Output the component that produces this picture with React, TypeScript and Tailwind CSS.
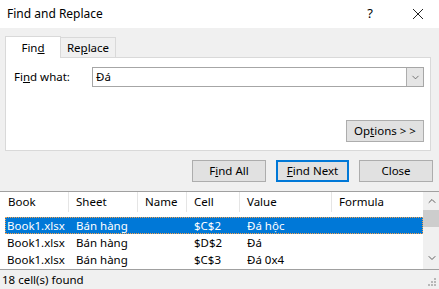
import { ChevronDown, ChevronUp } from "lucide-react";

const cols = [
  { name: "Book", w: "w-[64px]" },
  { name: "Sheet", w: "w-[69px]" },
  { name: "Name", w: "w-[49px]" },
  { name: "Cell", w: "w-[53px]" },
  { name: "Value", w: "w-[92px]" },
  { name: "Formula", w: "w-[90px]" },
];

const rows = [
  ["Book1.xlsx", "Bán hàng", "", "$C$2", "Đá hộc", ""],
  ["Book1.xlsx", "Bán hàng", "", "$D$2", "Đá", ""],
  ["Book1.xlsx", "Bán hàng", "", "$C$3", "Đá 0x4", ""],
];

function Btn({ children, focused, className }: { children: React.ReactNode; focused?: boolean; className?: string }) {
  return (
    <button
      className={`h-[22px] bg-[#e1e1e1] text-[11.5px] text-black flex items-center justify-center ${
        focused ? "border-2 border-[#0078d7]" : "border border-[#adadad]"
      } ${className ?? ""}`}
    >
      {children}
    </button>
  );
}

export default function App() {
  return (
    <div
      className="w-[439px] h-[289px] bg-[#f0f0f0] flex flex-col text-[11.5px] text-black overflow-hidden"
      style={{ fontFamily: '"Noto Sans", "Open Sans", sans-serif' }}
    >
      {/* Title bar */}
      <div className="h-[28px] bg-white flex items-center shrink-0">
        <span className="pl-[7px] text-[12px] flex-1">Find and Replace</span>
        <span className="w-[12px] text-center text-[13px] mr-[36px]">?</span>
        <svg width="12" height="12" viewBox="0 0 12 12" className="mr-[15px]">
          <path d="M1 1L11 11M11 1L1 11" stroke="#222" strokeWidth="1" />
        </svg>
      </div>

      {/* Tabs + panel */}
      <div className="px-[5px] pt-[7px] pr-[8px]">
        <div className="flex items-end h-[22px]">
          <div className="relative z-10 h-[22px] w-[56px] bg-white border border-b-0 border-[#d9d9d9] flex items-center justify-center -mb-px">
            Fin<u>d</u>
          </div>
          <div className="h-[20px] w-[55px] border border-l-0 border-b-0 border-[#d9d9d9] flex items-center justify-center pt-[1px]">
            Re<u>p</u>lace
          </div>
        </div>
        <div className="h-[94px] bg-white border border-[#d9d9d9] flex flex-col pl-[8px] pr-[6px]">
          <div className="flex items-center mt-[9px] h-[20px]">
            <span className="w-[78px]">
              Fi<u>n</u>d what:
            </span>
            <div className="flex-1 h-[20px] border border-[#a6a6a6] flex items-center">
              <span className="pl-[3px] flex-1">Đá</span>
              <div className="w-[17px] h-[18px] bg-[#e5e5e5] border-l border-[#adadad] flex items-center justify-center">
                <ChevronDown className="w-[11px] h-[11px] text-[#444]" strokeWidth={1.5} />
              </div>
            </div>
          </div>
          <div className="flex justify-end mt-[33px]">
            <Btn className="w-[78px]">
              Op<u>t</u>ions &gt; &gt;
            </Btn>
          </div>
        </div>
      </div>

      {/* Buttons */}
      <div className="flex justify-end gap-[10px] pr-[6px] mt-[9px]">
        <Btn className="w-[74px]">
          F<u>i</u>nd All
        </Btn>
        <Btn focused className="w-[73px]">
          <u>F</u>ind Next
        </Btn>
        <Btn className="w-[74px]">Close</Btn>
      </div>

      {/* Results list */}
      <div className="mt-[9px] border-y border-[#a0a0a0] h-[79px] bg-white flex shrink-0">
        <div className="flex-1 pl-[5px]">
          <div className="flex h-[25px]">
            {cols.map((c, i) => (
              <div
                key={c.name}
                className={`${c.w} ${i === cols.length - 1 ? "" : "border-r border-[#e5e5e5]"} h-[20px] pl-[3px] flex items-center ${
                  i === 0 ? "" : "pl-[7px]"
                }`}
              >
                {c.name}
              </div>
            ))}
          </div>
          {rows.map((r, ri) => (
            <div
              key={ri}
              className={`flex h-[17px] ${
                ri === 0 ? "bg-[#0078d7] text-white border border-dotted border-[#f5a04a]" : "border border-transparent"
              }`}
            >
              {r.map((v, i) => (
                <div key={i} className={`${cols[i].w} flex items-center ${i === 0 ? "pl-[1px]" : "pl-[7px]"} ${i === 0 ? "-mr-px" : ""}`}>
                  {v}
                </div>
              ))}
            </div>
          ))}
        </div>
        <div className="w-[17px] bg-[#f0f0f0] flex flex-col items-center">
          <ChevronUp className="w-[12px] h-[12px] mt-[3px] text-[#606060]" strokeWidth={2} />
          <div className="w-[17px] h-[17px] bg-[#cdcdcd] mt-[3px]" />
          <div className="flex-1" />
          <ChevronDown className="w-[12px] h-[12px] mb-[5px] text-[#606060]" strokeWidth={2} />
        </div>
      </div>

      {/* Status bar */}
      <div className="flex-1 flex items-center relative">
        <span className="pl-[2px]">18 cell(s) found</span>
        <svg width="9" height="9" viewBox="0 0 9 9" className="absolute right-[2px] bottom-[2px]">
          {[
            [6, 0],
            [3, 3],
            [6, 3],
            [0, 6],
            [3, 6],
            [6, 6],
          ].map(([x, y], i) => (
            <rect key={i} x={x} y={y} width="2" height="2" fill="#b8b8b8" />
          ))}
        </svg>
      </div>
    </div>
  );
}
